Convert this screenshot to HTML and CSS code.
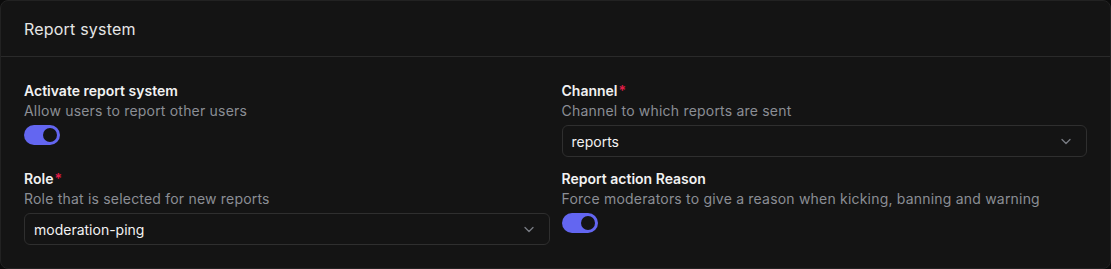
FILE: index.html
```html
<!DOCTYPE html>
<html lang="en">
<head>
<meta charset="utf-8">
<link rel="stylesheet" href="styles.css">
</head>
<body>
<section class="card">
  <header class="card-header">Report system</header>
  <div class="card-body">
    <div class="field">
      <div class="label">Activate report system</div>
      <div class="desc">Allow users to report other users</div>
      <div class="toggle"><span class="knob"></span></div>
    </div>
    <div class="field">
      <div class="label">Channel<span class="req">*</span></div>
      <div class="desc">Channel to which reports are sent</div>
      <div class="select"><span>reports</span>
        <svg class="chev" width="12" height="12" viewBox="0 0 12 12"><path d="M2 4.5 6 8.5 10 4.5" fill="none" stroke="currentColor" stroke-width="1.3" stroke-linecap="round" stroke-linejoin="round"/></svg>
      </div>
    </div>
    <div class="field">
      <div class="label">Role<span class="req">*</span></div>
      <div class="desc">Role that is selected for new reports</div>
      <div class="select"><span>moderation-ping</span>
        <svg class="chev" width="12" height="12" viewBox="0 0 12 12"><path d="M2 4.5 6 8.5 10 4.5" fill="none" stroke="currentColor" stroke-width="1.3" stroke-linecap="round" stroke-linejoin="round"/></svg>
      </div>
    </div>
    <div class="field">
      <div class="label">Report action Reason</div>
      <div class="desc">Force moderators to give a reason when kicking, banning and warning</div>
      <div class="toggle"><span class="knob"></span></div>
    </div>
  </div>
</section>
</body>
</html>
```
FILE: styles.css
```css
* { box-sizing: border-box; }
html, body { margin: 0; padding: 0; background: #0b0b0b; }
body {
  font-family: Inter, "Noto Sans", sans-serif;
  color: #ececec;
  width: 1111px;
  height: 269px;
}
.card {
  width: 1111px;
  height: 269px;
  background: #141414;
  border: 1px solid #222;
  border-radius: 8px;
  overflow: hidden;
}
.card-header {
  height: 56px;
  padding: 0 23px;
  display: flex;
  align-items: center;
  font-size: 16px;
  letter-spacing: 0.2px;
  color: #e6e6e6;
  border-bottom: 1px solid #2a2a2a;
}
.card-body {
  padding: 24px 23px 0;
  display: grid;
  grid-template-columns: 1fr 1fr;
  column-gap: 12px;
  row-gap: 12px;
}
.field { display: flex; flex-direction: column; align-items: flex-start; }
.label {
  font-size: 14px;
  line-height: 20px;
  font-weight: 600;
  color: #f2f2f2;
}
.req { color: #e11d48; margin-left: 1px; }
.desc {
  font-size: 14px;
  line-height: 20px;
  letter-spacing: 0.2px;
  color: #8b8e95;
  margin-bottom: 4px;
}
.toggle {
  width: 36px;
  height: 20px;
  border-radius: 10px;
  background: #6366f1;
  display: flex;
  align-items: center;
  justify-content: flex-end;
  padding: 0 3px;
}
.knob {
  width: 14px;
  height: 14px;
  border-radius: 50%;
  background: #141414;
}
.select {
  width: 100%;
  height: 32px;
  border: 1px solid #2f2f2f;
  border-radius: 6px;
  display: flex;
  align-items: center;
  justify-content: space-between;
  padding: 0 14px 0 9px;
  font-size: 14px;
  color: #f2f2f2;
}
.chev { color: #7a7d85; }
```
